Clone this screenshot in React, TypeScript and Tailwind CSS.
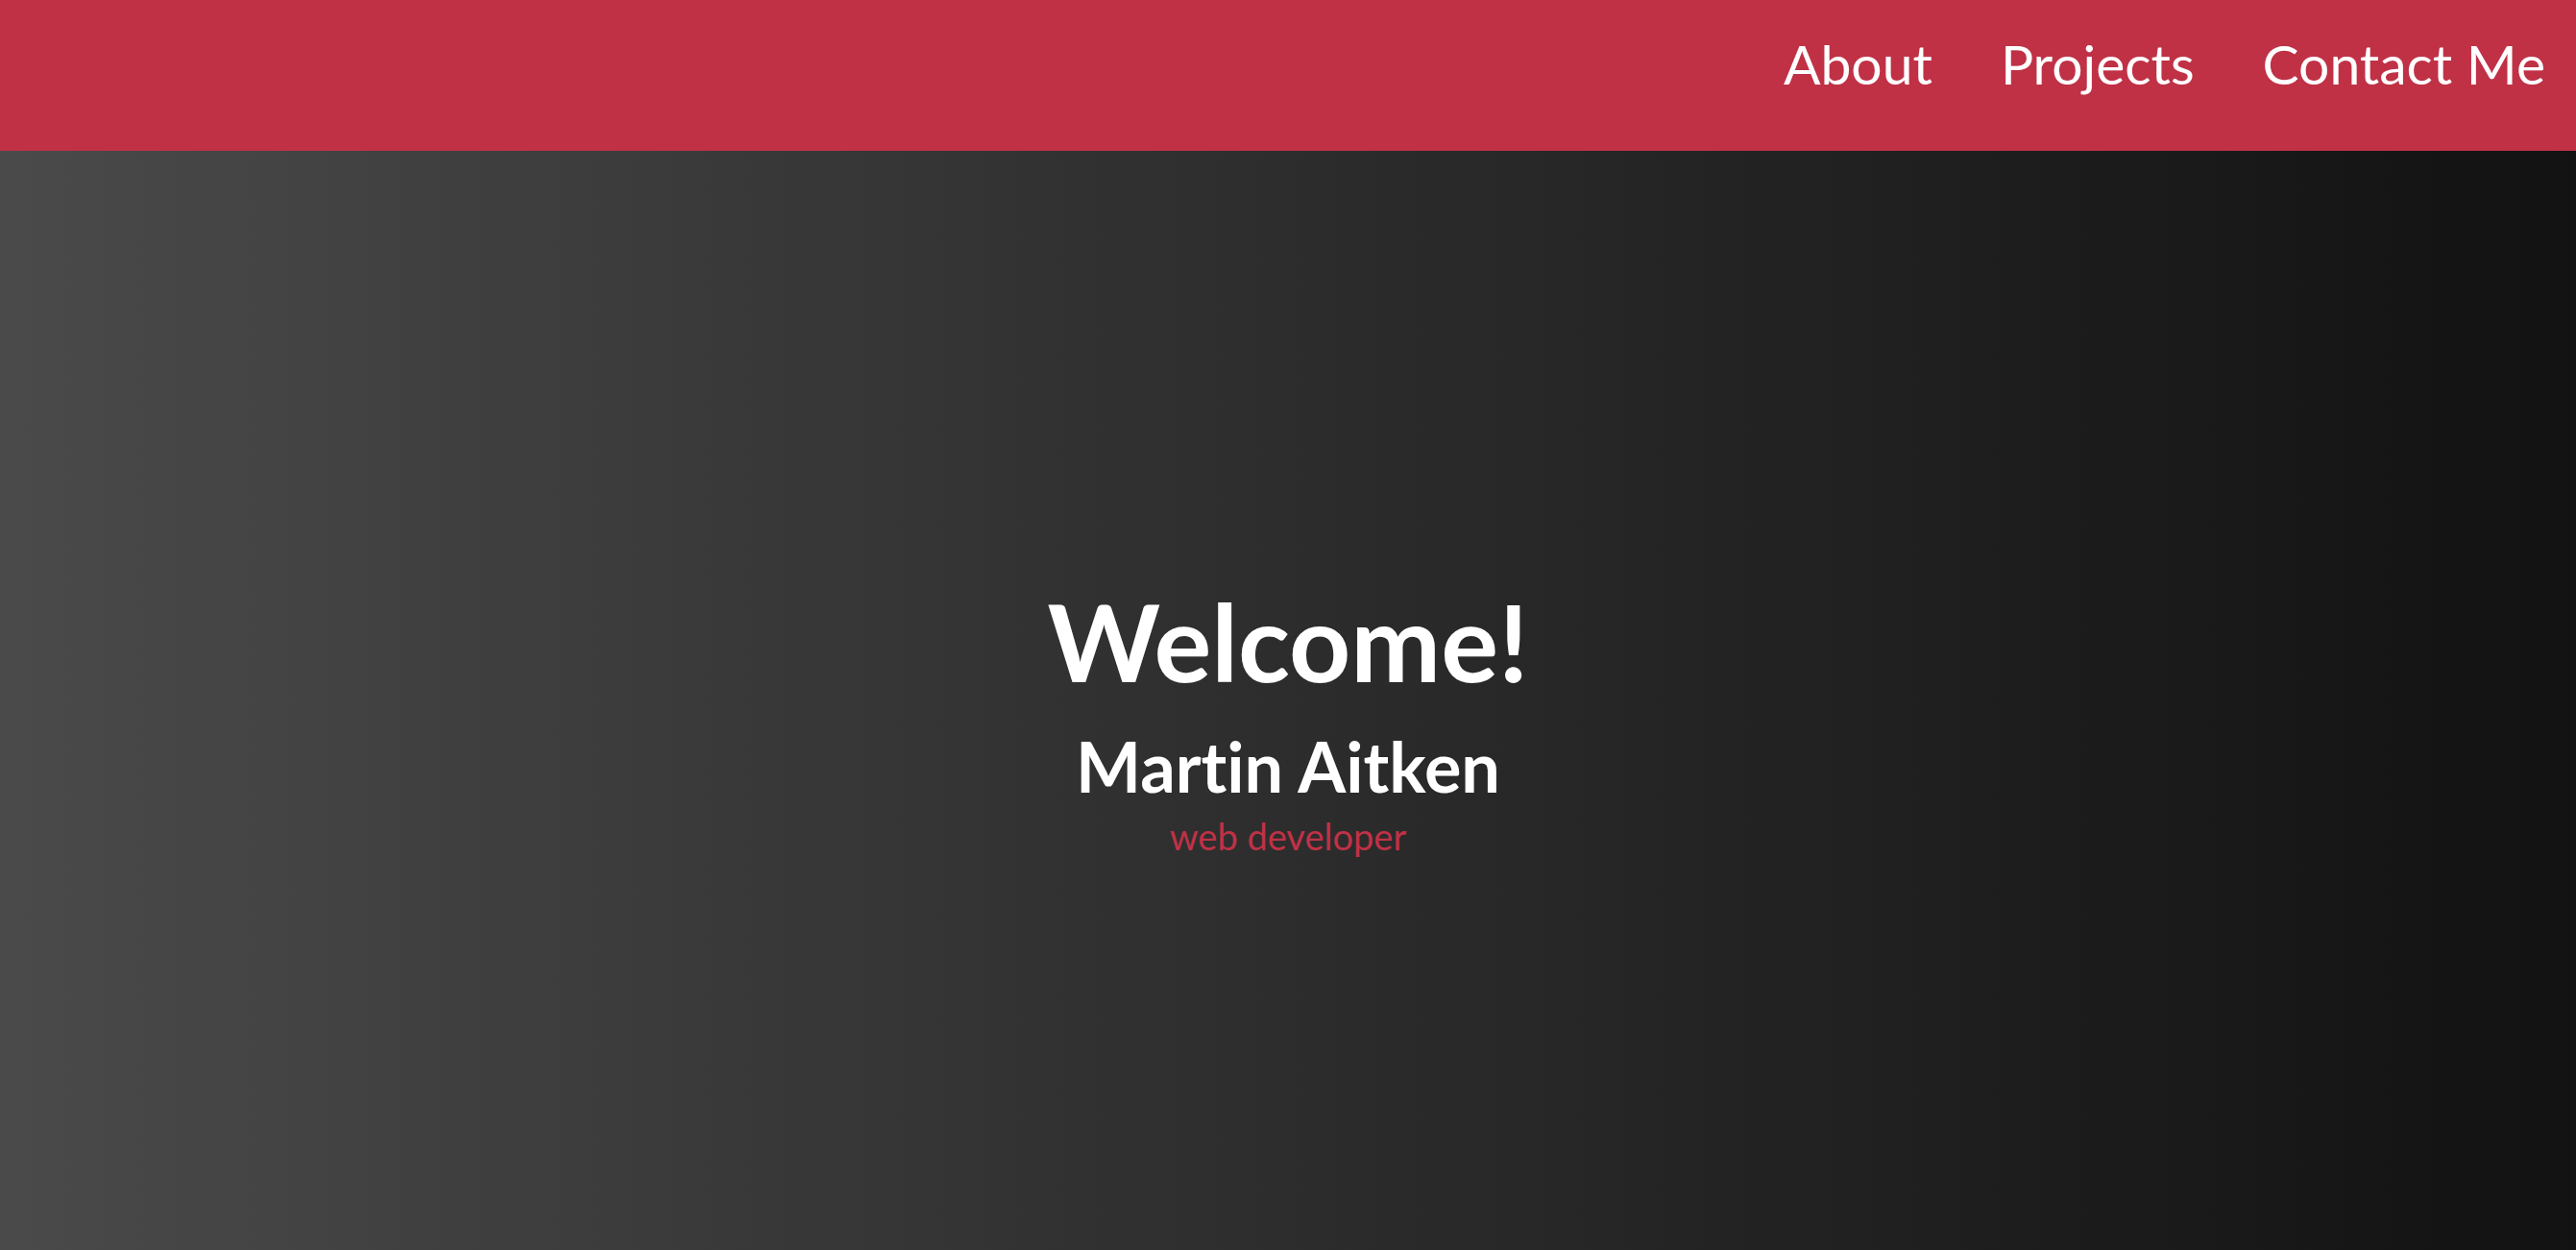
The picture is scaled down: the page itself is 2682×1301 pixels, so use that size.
export default function App() {
  return (
    <div className="min-h-screen flex flex-col font-['Lato','Noto_Sans',sans-serif] [font-variant-ligatures:none]">
      <nav className="h-[157px] bg-[#c03146] flex justify-end items-start pt-[26px] pr-[32px] gap-[71px] text-white text-[57px] leading-[80px]">
        <a href="#about">About</a>
        <a href="#projects">Projects</a>
        <a href="#contact">Contact Me</a>
      </nav>
      <main className="flex-1 h-[1144px] bg-gradient-to-r from-[#4a4a4a] to-[#121212] flex flex-col items-center justify-center pt-[36px] text-center">
        <h1 className="text-white text-[112px] font-bold leading-[130px]">Welcome!</h1>
        <h2 className="mt-[20px] text-white text-[72px] font-bold leading-[90px]">Martin Aitken</h2>
        <p className="mt-[6px] text-[#c03146] text-[38px] leading-[44px]">web developer</p>
      </main>
    </div>
  );
}
